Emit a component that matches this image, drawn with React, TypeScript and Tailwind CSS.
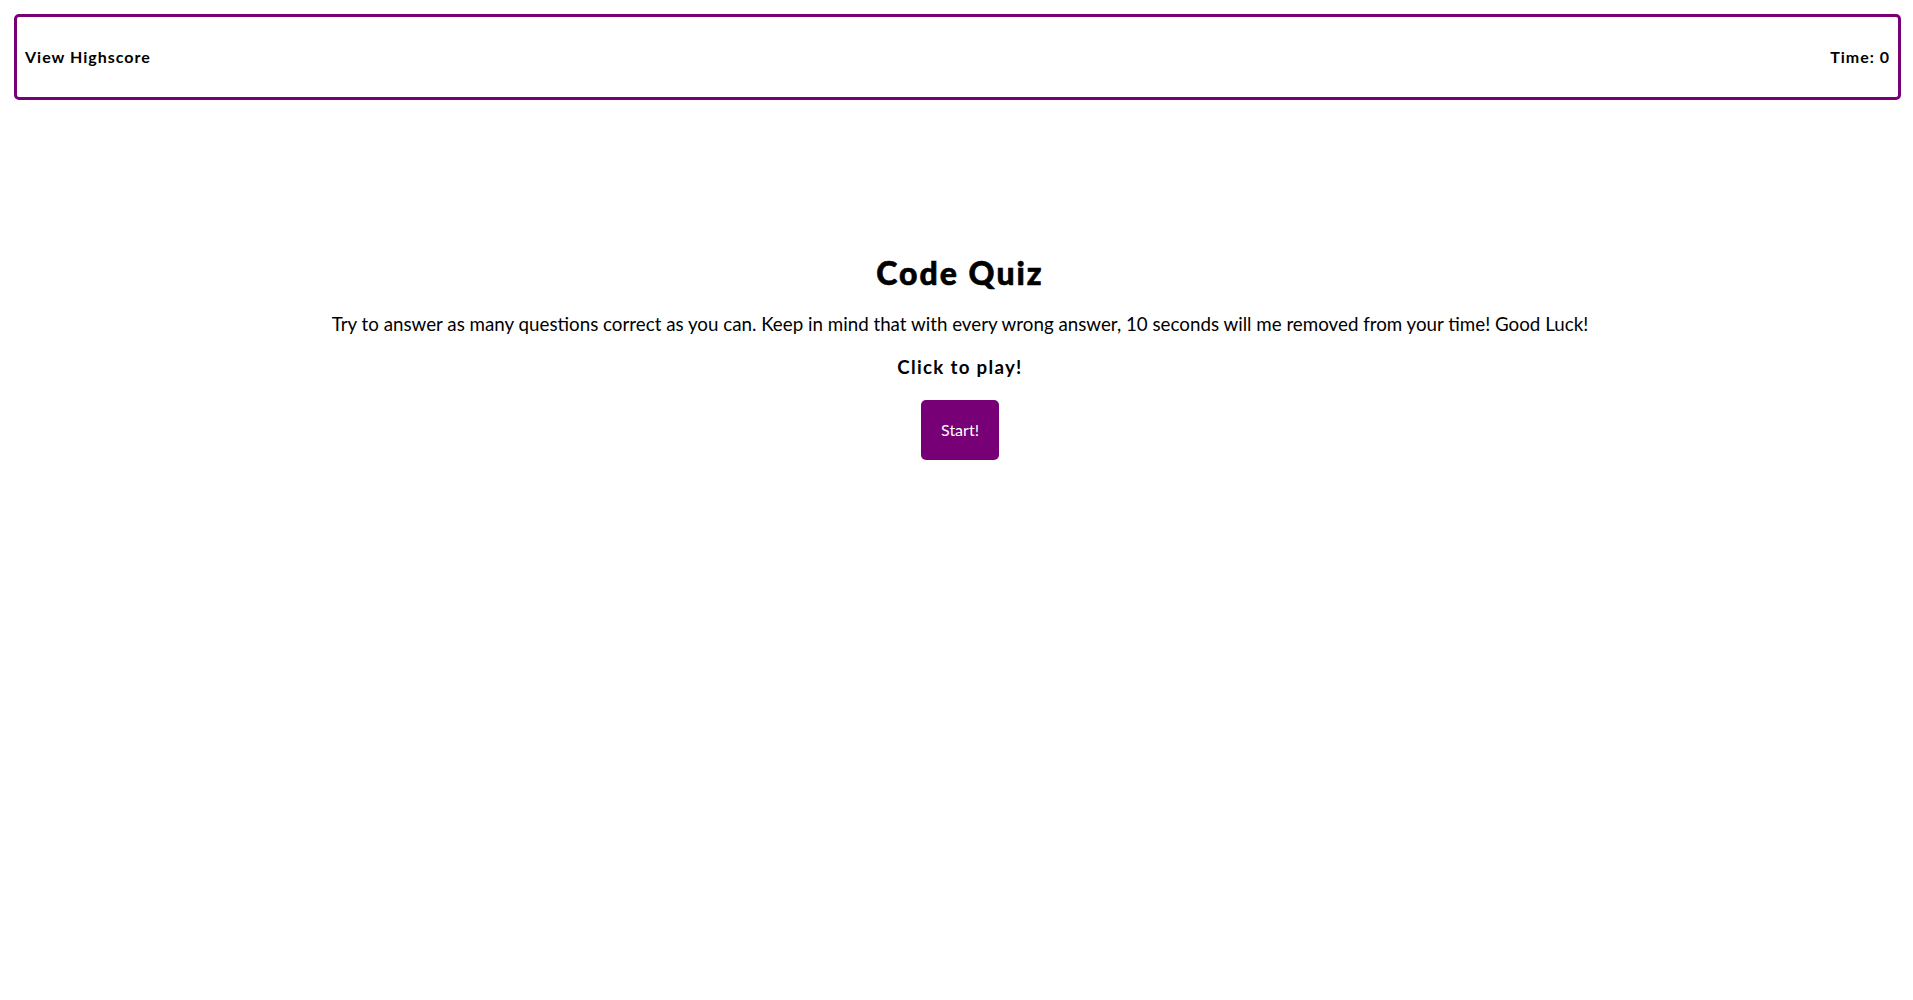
import React from 'react';

const App: React.FC = () => {
  return (
    <div className="min-h-screen bg-white text-black font-['Lato','Open_Sans',sans-serif]">
      <header className="mt-[14px] ml-[14px] mr-[12px] h-[86px] border-[3px] border-[#770077] rounded-[5px] flex items-center justify-between px-2 text-[16px] font-bold tracking-[1px]">
        <span>View Highscore</span>
        <span>Time: 0</span>
      </header>

      <main className="flex flex-col items-center text-center pl-[7px]">
        <h1 className="mt-[157px] text-[32px] leading-[32px] font-black tracking-[2px] [-webkit-text-stroke:0.6px_black]">Code Quiz</h1>
        <p className="mt-[25px] text-[18.75px] leading-[20px]">
          Try to answer as many questions correct as you can. Keep in mind that with every wrong answer, 10 seconds will me removed from your time! Good Luck!
        </p>
        <h3 className="mt-[23px] text-[18.72px] leading-[20px] font-bold tracking-[1.3px]">Click to play!</h3>
        <button className="mt-[23px] w-[78px] h-[60px] rounded-[5px] bg-[#770077] text-white text-[16px]">
          Start!
        </button>
      </main>
    </div>
  );
};

export default App;
